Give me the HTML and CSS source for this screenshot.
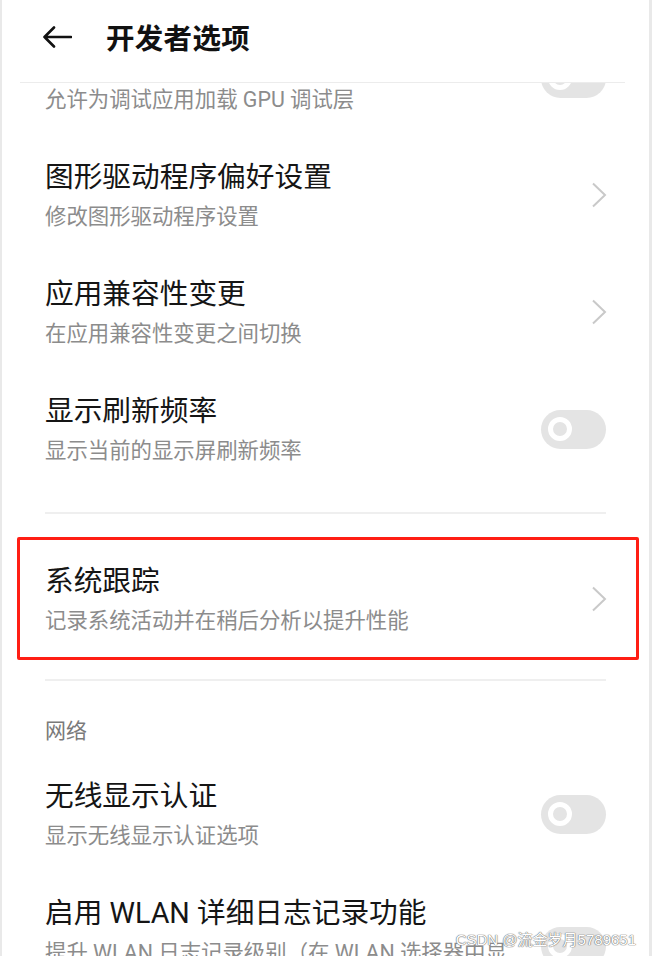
FILE: index.html
```html
<!DOCTYPE html>
<html lang="zh-CN">
<head>
  <meta charset="UTF-8" />
  <meta name="viewport" content="width=device-width, initial-scale=1.0"/>
  <title>开发者选项</title>
  <link rel="stylesheet" href="styles.css">
</head>
<body>
  <div class="phone">
    <div class="header">
      <svg class="back" width="30" height="24" viewBox="0 0 30 24">
        <path d="M29 12H2.5M12 2.5L2.5 12l9.5 9.5" fill="none" stroke="#111" stroke-width="2.6" stroke-linecap="round" stroke-linejoin="round"/>
      </svg>
      <h1 class="title">开发者选项</h1>
    </div>
    <div class="header-line"></div>

    <div class="content">
      <div class="list">
        <div class="item first">
          <div class="text">
            <div class="desc">允许为调试应用加载 GPU 调试层</div>
          </div>
          <span class="toggle"><span class="knob"></span></span>
        </div>

        <div class="item">
          <div class="text">
            <div class="name">图形驱动程序偏好设置</div>
            <div class="desc">修改图形驱动程序设置</div>
          </div>
          <svg class="chevron" width="16" height="26" viewBox="0 0 16 26"><path d="M2 1.5l12 11.5L2 24.5" fill="none" stroke="#c9c9c9" stroke-width="2"/></svg>
        </div>

        <div class="item">
          <div class="text">
            <div class="name">应用兼容性变更</div>
            <div class="desc">在应用兼容性变更之间切换</div>
          </div>
          <svg class="chevron" width="16" height="26" viewBox="0 0 16 26"><path d="M2 1.5l12 11.5L2 24.5" fill="none" stroke="#c9c9c9" stroke-width="2"/></svg>
        </div>

        <div class="item">
          <div class="text">
            <div class="name">显示刷新频率</div>
            <div class="desc">显示当前的显示屏刷新频率</div>
          </div>
          <span class="toggle"><span class="knob"></span></span>
        </div>

        <div class="divider"></div>

        <div class="highlight">
          <div class="item">
            <div class="text">
              <div class="name">系统跟踪</div>
              <div class="desc">记录系统活动并在稍后分析以提升性能</div>
            </div>
            <svg class="chevron" width="16" height="26" viewBox="0 0 16 26"><path d="M2 1.5l12 11.5L2 24.5" fill="none" stroke="#c9c9c9" stroke-width="2"/></svg>
          </div>
        </div>

        <div class="divider after"></div>

        <div class="section">网络</div>

        <div class="item">
          <div class="text">
            <div class="name">无线显示认证</div>
            <div class="desc">显示无线显示认证选项</div>
          </div>
          <span class="toggle"><span class="knob"></span></span>
        </div>

        <div class="item">
          <div class="text narrow">
            <div class="name">启用 WLAN 详细日志记录功能</div>
            <div class="desc">提升 WLAN 日志记录级别（在 WLAN 选择器中显示每个 SSID 的 RSSI）</div>
          </div>
          <span class="toggle"><span class="knob"></span></span>
        </div>
      </div>
    </div>

    <div class="watermark">CSDN @流金岁月5789651</div>
  </div>
</body>
</html>
```

FILE: styles.css
```css
body {
  margin: 0;
  background: #fff;
  font-family: Roboto, "Noto Sans CJK SC", sans-serif;
}

.phone {
  position: relative;
  display: flex;
  flex-direction: column;
  width: 647px;
  height: 956px;
  border-left: 2px solid #e9e9e9;
  border-right: 3px solid #e9e9e9;
  overflow: hidden;
  background: #fff;
}

.header {
  flex: none;
  display: flex;
  align-items: center;
  height: 82px;
  padding-left: 40px;
}

.back {
  margin-top: -8px;
}

.title {
  margin: -9px 0 0 34px;
  font-size: 28.5px;
  font-weight: 700;
  color: #111;
  letter-spacing: 0.3px;
}

.header-line {
  flex: none;
  height: 1px;
  margin: 0 24px 0 18px;
  background: #ececec;
}

.content {
  flex: 1;
  overflow: hidden;
}

.list {
  padding: 0 43px;
}

.item {
  display: flex;
  align-items: center;
  justify-content: space-between;
  padding: 22px 0 21px;
}

/* scrolled off under the header: only the summary line peeks out */
.item.first {
  height: 74px;
  margin-top: -64px;
  align-items: flex-end;
}

.item.first .toggle {
  align-self: center;
}

.text.narrow {
  max-width: 470px;
}

.name {
  font-size: 28.7px;
  line-height: 38px;
  color: #151515;
}

.desc {
  margin-top: 6px;
  font-size: 21.4px;
  line-height: 30px;
  color: #8c8c8c;
}

.chevron {
  flex: none;
  margin-right: -1px;
}

.toggle {
  flex: none;
  display: flex;
  align-items: center;
  width: 65px;
  height: 39px;
  border-radius: 20px;
  background: #e4e4e4;
}

.knob {
  width: 14px;
  height: 14px;
  margin-left: 7px;
  border: 5px solid #fff;
  border-radius: 50%;
  background: #e4e4e4;
}

.divider {
  height: 2px;
  margin: 25px 0 23px;
  background: #efefef;
}

.divider.after {
  margin: 19px 0 35px;
}

.highlight {
  margin: 0 -33px 0 -28px;
  padding: 0 30px 0 25px;
  border: 3px solid #ff1e14;
  border-radius: 2px;
}

.section {
  margin-bottom: 9px;
  font-size: 21px;
  line-height: 30px;
  color: #7a7a7a;
}

.watermark {
  position: absolute;
  right: 13px;
  bottom: 7px;
  font-family: "Liberation Sans", "Noto Sans CJK SC", sans-serif;
  font-size: 15px;
  color: #fff;
  text-shadow: 0 0 1px #777, 0 0 1px #777, 0 0 1px #777;
}
```
